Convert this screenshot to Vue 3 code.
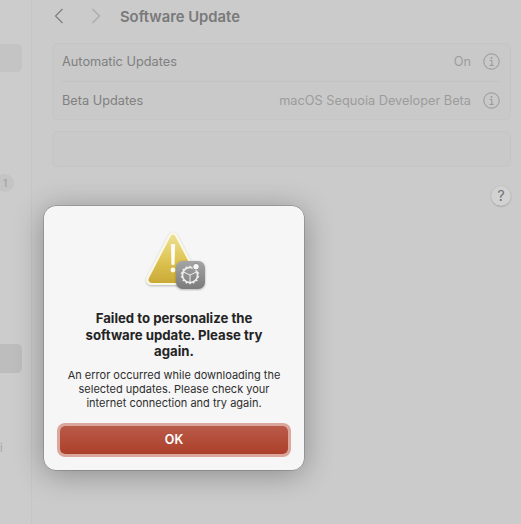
<script setup>
const rows = [
  { label: 'Automatic Updates', value: 'On' },
  { label: 'Beta Updates', value: 'macOS Sequoia Developer Beta' },
]
const teeth = Array.from({ length: 14 }, (_, i) => (i * 360) / 14)
</script>

<template>
  <div class="window">
    <aside class="sidebar">
      <div class="side-item first"></div>
      <div class="badge">1</div>
      <div class="side-item second"></div>
      <div class="stray">i</div>
    </aside>

    <main class="content">
      <header class="toolbar">
        <svg width="10" height="16" viewBox="0 0 10 16">
          <path d="M8.500 1 1.500 8l7 7" fill="none" stroke="#7e7e7e" stroke-width="1.200" />
        </svg>
        <svg class="fwd" width="10" height="16" viewBox="0 0 10 16">
          <path d="M1.500 1l7 7-7 7" fill="none" stroke="#a9a9a9" stroke-width="1.200" />
        </svg>
        <h1 class="page-title">Software Update</h1>
      </header>

      <section class="card">
        <div v-for="row in rows" :key="row.label" class="row">
          <span class="row-label">{{ row.label }}</span>
          <span class="row-value">{{ row.value }}</span>
          <svg class="info" width="17" height="17" viewBox="0 0 17 17">
            <circle cx="8.500" cy="8.500" r="7.700" fill="none" stroke="#969696" stroke-width="1" />
            <circle cx="8.500" cy="4.900" r="0.900" fill="#969696" />
            <path d="M6.800 7.400h2.100v4.900M6.500 12.400h4.200" fill="none" stroke="#969696" stroke-width="1" />
          </svg>
        </div>
      </section>

      <section class="card empty"></section>

      <div class="help-wrap">
        <div class="help">?</div>
      </div>
    </main>

    <div class="dialog" role="alertdialog">
      <svg class="alert-icon" width="64" height="64" viewBox="0 0 64 64">
        <defs>
          <linearGradient id="gold" x1="0" y1="0" x2="0" y2="1">
            <stop offset="0" stop-color="#eee29a" />
            <stop offset="0.5" stop-color="#dfc655" />
            <stop offset="1" stop-color="#c8a835" />
          </linearGradient>
          <linearGradient id="slate" x1="0" y1="0" x2="0" y2="1">
            <stop offset="0" stop-color="#a5a5a5" />
            <stop offset="1" stop-color="#7b7b7b" />
          </linearGradient>
          <filter id="soft" x="-20%" y="-20%" width="140%" height="140%">
            <feDropShadow dx="0" dy="0.800" stdDeviation="0.800" flood-opacity="0.300" />
          </filter>
        </defs>
        <path
          d="M26.500 9C28.400 5.600 31.600 5.600 33.500 9L55 50.500c1.600 3.200-.2 6.500-3.800 6.500H8.800C5.200 57 3.400 53.700 5 50.500Z"
          fill="url(#gold)" stroke="#fbf8e6" stroke-width="2.200" stroke-linejoin="round" filter="url(#soft)"
        />
        <path d="M28.300 17.500h3.400l-.6 20h-2.200Z" fill="#fdfdf8" stroke="#fdfdf8" stroke-width="0.800" stroke-linejoin="round" />
        <circle cx="30" cy="43" r="2.400" fill="#fdfdf8" />
        <rect x="33" y="34" width="29" height="28" rx="6.500" fill="url(#slate)" filter="url(#soft)" />
        <g fill="none" stroke="#eeeeee">
          <circle cx="47" cy="48" r="7.600" stroke-width="1.700" />
          <g stroke-width="1.500">
            <line v-for="a in teeth" :key="a" x1="47" y1="38.700" x2="47" y2="40.500" :transform="`rotate(${a} 47 48)`" />
          </g>
          <path d="M47 48v7M47 48l-6.500-3M47 48l6.500-3" stroke-width="1" />
        </g>
        <circle cx="53" cy="39.700" r="3.300" fill="#f6f6f6" stroke="#8e8e8e" stroke-width="1" />
      </svg>

      <h2 class="dialog-title">Failed to personalize the software update. Please try again.</h2>
      <p class="dialog-text">An error occurred while downloading the selected updates. Please check your internet connection and try again.</p>
      <button class="ok" type="button">OK</button>
    </div>
  </div>
</template>

<style>
html, body { margin: 0; padding: 0; background: #cbcbcb; }
</style>

<style scoped>
.window {
  position: relative;
  display: flex;
  width: 521px;
  height: 524px;
  overflow: hidden;
  background: #cbcbcb;
  font-family: Inter, "Liberation Sans", sans-serif;
}
.sidebar {
  position: relative;
  box-sizing: border-box;
  width: 32px;
  flex: none;
  background: #cccccc;
  border-right: 1px solid #c5c5c5;
}
.side-item {
  position: absolute;
  left: -10px;
  width: 32px;
  background: #c2c2c2;
  border-radius: 5px;
}
.first { top: 44px; height: 28px; background: #c4c4c4; }
.second { top: 344px; height: 29px; background: #bdbdbd; }
.badge {
  position: absolute;
  left: -4px;
  top: 174px;
  width: 18px;
  height: 18px;
  border-radius: 50%;
  background: #c4c4c4;
  color: #a6a6a6;
  font-size: 10px;
  font-weight: 600;
  line-height: 18px;
  text-align: center;
}
.stray {
  position: absolute;
  left: 0;
  top: 441px;
  color: #a5a5a5;
  font-size: 11px;
  line-height: 14px;
}
.content {
  flex: 1;
  min-width: 0;
  box-sizing: border-box;
  padding: 0 10px 0 20px;
}
.toolbar {
  display: flex;
  align-items: center;
  height: 32px;
  padding-left: 2px;
}
.fwd { margin-left: 27px; }
.page-title {
  margin: 1px 0 0 19px;
  color: #797979;
  font-size: 14.800px;
  font-weight: 600;
  line-height: 32px;
}
.card {
  box-sizing: border-box;
  margin-top: 11px;
  padding: 0 10px 0 9px;
  border: 1px solid #c5c5c5;
  border-radius: 5px;
  background: #c9c9c9;
}
.row {
  display: flex;
  align-items: center;
  box-sizing: border-box;
  height: 37px;
  padding-bottom: 2px;
  color: #808080;
  font-size: 12.750px;
}
.row + .row { height: 38px; padding-bottom: 0; border-top: 1px solid #c3c3c3; }
.row-label { flex: 1; }
.row-value { color: #9c9c9c; }
.info { margin-left: 12px; }
.card.empty { height: 36px; }
.help-wrap {
  display: flex;
  justify-content: flex-end;
  margin-top: 19px;
}
.help {
  width: 20px;
  height: 20px;
  border-radius: 50%;
  background: #d2d2d2;
  box-shadow: 0 0.5px 1.5px rgba(0, 0, 0, 0.28);
  color: #6f6f6f;
  font-size: 14px;
  line-height: 20px;
  text-align: center;
}
.dialog {
  position: absolute;
  left: 44px;
  top: 206px;
  box-sizing: border-box;
  display: flex;
  flex-direction: column;
  align-items: center;
  width: 260px;
  height: 264px;
  padding: 21px 14px 0;
  border-radius: 12px;
  background: #f6f6f6;
  box-shadow: 0 0 0 0.5px rgba(0, 0, 0, 0.3), 0 4px 30px rgba(0, 0, 0, 0.32);
}
.alert-icon { margin-left: 2px; flex: none; }
.dialog-title {
  margin: 19px 0 0;
  color: #242424;
  font-size: 13.200px;
  font-weight: 700;
  line-height: 16.500px;
  text-align: center;
  width: 200px;
}
.dialog-text {
  margin: 8px 0 0;
  color: #2e2e2e;
  font-size: 11px;
  font-weight: 400;
  line-height: 14px;
  text-align: center;
  width: 225px;
}
.ok {
  box-sizing: border-box;
  flex: none;
  width: 228px;
  height: 28px;
  margin-top: 16px;
  border: 0;
  border-radius: 5px;
  background: linear-gradient(#b95a49, #ac402a);
  box-shadow: 0 0 0 3px #dba79d;
  color: #ffffff;
  font-family: inherit;
  font-size: 12.500px;
  font-weight: 600;
}
</style>
